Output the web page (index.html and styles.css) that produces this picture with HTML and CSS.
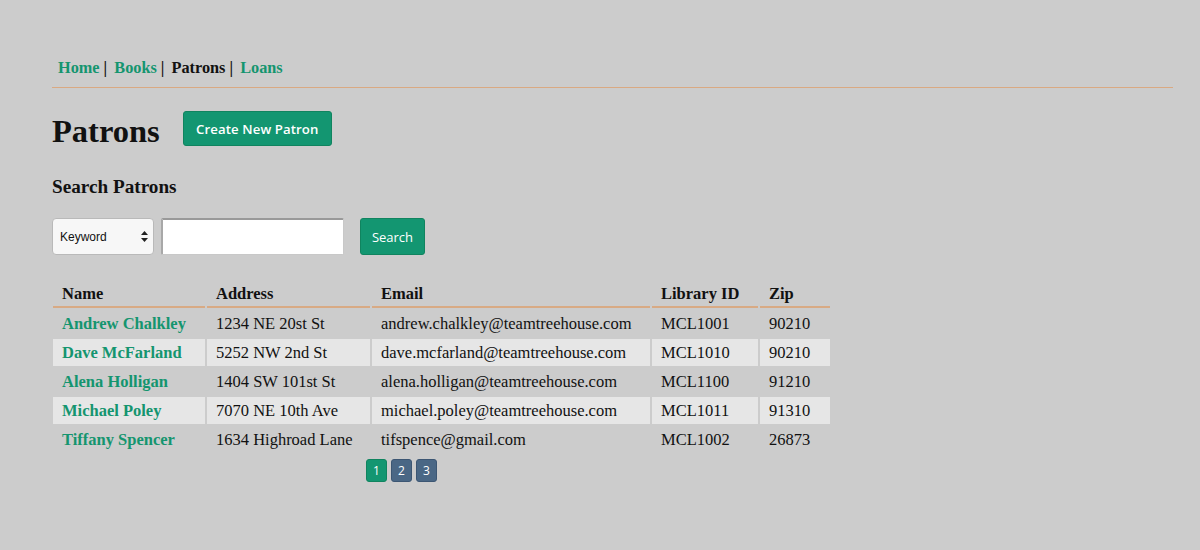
FILE: index.html
```html
<!DOCTYPE html>
<html>
<head>
<meta charset="utf-8">
<link rel="stylesheet" href="styles.css">
</head>
<body>
<div class="page">
  <nav class="nav">
    <a href="#" class="nav-link">Home</a><span class="sep">|</span>
    <a href="#" class="nav-link">Books</a><span class="sep">|</span>
    <span class="nav-current">Patrons</span><span class="sep">|</span>
    <a href="#" class="nav-link">Loans</a>
  </nav>

  <div class="title-row">
    <h1 class="title">Patrons</h1>
    <a href="#" class="btn btn-create">Create New Patron</a>
  </div>

  <h3 class="subtitle">Search Patrons</h3>

  <form class="search">
    <div class="select-wrap">
      <select class="select">
        <option>Keyword</option>
      </select>
      <svg class="select-arrows" width="7" height="11" viewBox="0 0 7 11"><path d="M3.5 0 L7 4 L0 4 Z M0 7 L7 7 L3.5 11 Z" fill="#222"/></svg>
    </div>
    <input class="text-input" type="text">
    <button type="button" class="btn btn-search">Search</button>
  </form>

  <table class="table">
    <colgroup>
      <col class="c-name"><col class="c-addr"><col class="c-email"><col class="c-id"><col class="c-zip">
    </colgroup>
    <thead>
      <tr><th>Name</th><th>Address</th><th>Email</th><th>Library ID</th><th>Zip</th></tr>
    </thead>
    <tbody>
      <tr><td><a href="#" class="name">Andrew Chalkley</a></td><td>1234 NE 20st St</td><td>andrew.chalkley@teamtreehouse.com</td><td>MCL1001</td><td>90210</td></tr>
      <tr class="alt"><td><a href="#" class="name">Dave McFarland</a></td><td>5252 NW 2nd St</td><td>dave.mcfarland@teamtreehouse.com</td><td>MCL1010</td><td>90210</td></tr>
      <tr><td><a href="#" class="name">Alena Holligan</a></td><td>1404 SW 101st St</td><td>alena.holligan@teamtreehouse.com</td><td>MCL1100</td><td>91210</td></tr>
      <tr class="alt"><td><a href="#" class="name">Michael Poley</a></td><td>7070 NE 10th Ave</td><td>michael.poley@teamtreehouse.com</td><td>MCL1011</td><td>91310</td></tr>
      <tr><td><a href="#" class="name">Tiffany Spencer</a></td><td>1634 Highroad Lane</td><td>tifspence@gmail.com</td><td>MCL1002</td><td>26873</td></tr>
    </tbody>
  </table>

  <div class="pagination">
    <a href="#" class="page-btn active">1</a>
    <a href="#" class="page-btn">2</a>
    <a href="#" class="page-btn">3</a>
  </div>
</div>
</body>
</html>
```
FILE: styles.css
```css
html, body {
  margin: 0;
  padding: 0;
  background: #cccccc;
}
body {
  font-family: "Liberation Serif", "Times New Roman", serif;
  color: #111;
}
.page {
  padding: 59px 27px 0 52px;
}
a { text-decoration: none; }

.nav {
  font-weight: bold;
  font-size: 16.3px;
  line-height: 18px;
  height: 18px;
  padding: 0 0 10px 6px;
  border-bottom: 1px solid #d9a982;
}
.nav-link { color: #14956f; }
.nav-current { color: #111; }
.sep {
  color: #111;
  margin: 0 3px 0 4px;
}

.title-row {
  display: flex;
  align-items: flex-start;
  margin-top: 23px;
}
.title {
  font-size: 32.5px;
  line-height: 32px;
  margin: 4px 23px 0 0;
}
.btn {
  display: inline-flex;
  align-items: center;
  justify-content: center;
  background: #139671;
  color: #fff;
  font-family: "Open Sans", "Liberation Sans", sans-serif;
  border: 1px solid #10845f;
  border-radius: 3px;
  box-sizing: border-box;
  cursor: pointer;
}
.btn-create {
  width: 149px;
  height: 35px;
  font-size: 13.2px;
  font-weight: 600;
  letter-spacing: 0.1px;
}

.subtitle {
  font-size: 19.2px;
  line-height: 22px;
  margin: 29px 0 0 0;
}

.search {
  display: flex;
  align-items: center;
  margin-top: 20px;
}
.select-wrap {
  position: relative;
  width: 102px;
  height: 37px;
}
.select {
  appearance: none;
  -webkit-appearance: none;
  width: 100%;
  height: 100%;
  box-sizing: border-box;
  background: #f7f7f7;
  border: 1px solid #b9b9b9;
  border-radius: 4px;
  padding: 0 0 0 7px;
  font-family: "Liberation Sans", Arial, sans-serif;
  font-size: 12px;
  color: #111;
  margin: 0;
}
.select-arrows {
  position: absolute;
  right: 6px;
  top: 13px;
}
.text-input {
  margin: 0 0 0 7px;
  width: 183px;
  height: 37px;
  box-sizing: border-box;
  background: #fff;
  border: 1px solid #c8c8c8;
  border-top: 2px solid #999;
  border-left: 2px solid #a8a8a8;
  border-radius: 2px;
}
.btn-search {
  margin-left: 16px;
  width: 65px;
  height: 37px;
  font-size: 13px;
  padding: 0;
}

.table {
  margin-top: 23px;
  margin-left: -1px;
  border-spacing: 2px;
  table-layout: fixed;
  width: 781px;
  font-size: 16.5px;
}
.c-name { width: 152px; }
.c-addr { width: 163px; }
.c-email { width: 278px; }
.c-id { width: 106px; }
.c-zip { width: 70px; }
.table th, .table td {
  text-align: left;
  padding: 4px 9px;
  line-height: 19px;
  white-space: nowrap;
}
.table th {
  font-weight: bold;
  padding-bottom: 3px;
  border-bottom: 2px solid #d8aa84;
}
.table tr.alt td {
  background: #e6e6e6;
}
.name {
  color: #14956f;
  font-weight: bold;
}

.pagination {
  display: flex;
  gap: 4px;
  margin: 4px 0 0 314px;
}
.page-btn {
  width: 21px;
  height: 23px;
  box-sizing: border-box;
  display: flex;
  align-items: center;
  justify-content: center;
  background: #4a6785;
  border: 1px solid #3c5673;
  border-radius: 3px;
  color: #fff;
  font-family: "Open Sans", "Liberation Sans", sans-serif;
  font-size: 12px;
}
.page-btn.active {
  background: #139671;
  border-color: #10845f;
}
```
